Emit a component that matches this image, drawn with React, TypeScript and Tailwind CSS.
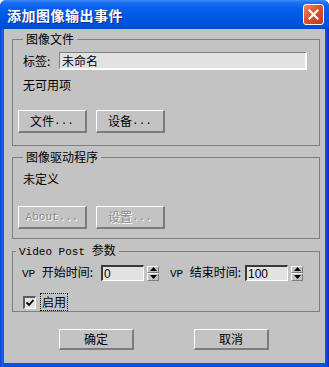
import type { ReactNode } from "react";

const cjk = "font-['Noto_Sans_CJK_SC',sans-serif]";
const mono = "font-['Liberation_Mono',monospace]";

function Btn({ children, disabled, className = "" }: { children: ReactNode; disabled?: boolean; className?: string }) {
  return (
    <button
      className={`flex items-center justify-center bg-[#c3c3c3] border-t border-l border-t-white border-l-white border-r-2 border-b-2 border-r-[#7c7c7c] border-b-[#7c7c7c] text-[12px] leading-none ${cjk} ${
        disabled ? "text-[#8a8a8a] [text-shadow:1px_1px_0_#ffffff]" : "text-black"
      } ${className}`}
    >
      {children}
    </button>
  );
}

function Spinner({ value }: { value: string }) {
  return (
    <div className="flex items-center">
      <div className="w-[43px] h-[16px] bg-[#e2e2e2] border-t-2 border-l-2 border-t-[#3a3a3a] border-l-[#3a3a3a] border-b border-r border-b-white border-r-white flex items-center pl-[1px] text-[12px] leading-none font-['Liberation_Sans',sans-serif]">
        {value}
      </div>
      <div className="ml-[3px] w-[12px] h-[15px] flex flex-col">
        <div className="flex-1 flex items-center justify-center border-t border-l border-t-white border-l-white border-r border-b border-r-[#7c7c7c] border-b-[#7c7c7c]">
          <svg width="7" height="4" viewBox="0 0 7 4">
            <path d="M3.5 0 L7 4 L0 4 Z" fill="#000" />
          </svg>
        </div>
        <div className="flex-1 flex items-center justify-center border-t border-l border-t-white border-l-white border-r border-b border-r-[#7c7c7c] border-b-[#7c7c7c]">
          <svg width="7" height="4" viewBox="0 0 7 4">
            <path d="M0 0 L7 0 L3.5 4 Z" fill="#000" />
          </svg>
        </div>
      </div>
    </div>
  );
}

export default function App() {
  return (
    <div className="w-[329px] h-[367px] flex flex-col rounded-t-[6px] overflow-hidden bg-[linear-gradient(90deg,#0a3fd0_0px,#1a62ee_2px,#0054e3_4px,#0054e3_325px,#0a45d8_327px,#0832b8_329px)]">
      {/* Title bar */}
      <div className="h-[29px] flex items-center pl-[7px] pr-[5px] bg-[linear-gradient(180deg,#3d8cf7_0px,#1a6ef5_3px,#0760ee_8px,#0058e6_16px,#0052de_24px,#0049d0_29px)]">
        <span className={`text-white font-bold text-[14px] leading-none tracking-[0.5px] ${cjk} [text-shadow:1px_1px_0_#0b2a8c]`}>
          添加图像输出事件
        </span>
        <div className="ml-auto w-[21px] h-[21px] rounded-[3px] border border-white bg-[linear-gradient(135deg,#f08a6a,#e0502c_45%,#c63a18)] flex items-center justify-center">
          <svg width="11" height="11" viewBox="0 0 11 11">
            <path d="M1.5 1.5 L9.5 9.5 M9.5 1.5 L1.5 9.5" stroke="#fff" strokeWidth="2.2" strokeLinecap="square" />
          </svg>
        </div>
      </div>

      {/* Client area */}
      <div className={`flex-1 mx-[4px] mb-[4px] bg-[#c3c3c3] flex flex-col ${cjk} text-[12px] text-black`}>
        {/* 图像文件 */}
        <fieldset className="mt-[3px] ml-[8px] mr-[5px] h-[114px] border border-[#7f7f7f]">
          <legend className="ml-[10px] px-[3px] text-[12px] leading-[14px]">图像文件</legend>
          <div className="mt-[6px] flex items-center pl-[10px]">
            <span className="w-[36px] leading-none">标签:</span>
            <div className="w-[248px] h-[18px] bg-[#e2e2e2] border-t border-l border-t-[#808080] border-l-[#808080] border-b-2 border-r-2 border-b-white border-r-white pl-[2px] flex items-center leading-none">
              未命名
            </div>
          </div>
          <div className="mt-[8px] pl-[10px] leading-[14px]">无可用项</div>
          <div className="mt-[18px] pl-[5px] flex gap-[9px]">
            <Btn className="w-[69px] h-[23px]">
              文件<span className={`${mono} text-[11px]`}>...</span>
            </Btn>
            <Btn className="w-[69px] h-[23px]">
              设备<span className={`${mono} text-[11px]`}>...</span>
            </Btn>
          </div>
        </fieldset>

        {/* 图像驱动程序 */}
        <fieldset className="mt-[4px] ml-[8px] mr-[5px] h-[89px] border border-[#7f7f7f]">
          <legend className="ml-[10px] px-[3px] text-[12px] leading-[14px]">图像驱动程序</legend>
          <div className="mt-[8px] pl-[10px] leading-[14px]">未定义</div>
          <div className="mt-[20px] pl-[5px] flex gap-[9px]">
            <Btn disabled className="w-[69px] h-[23px]">
              <span className={`${mono} text-[11px]`}>About...</span>
            </Btn>
            <Btn disabled className="w-[69px] h-[23px]">
              设置<span className={`${mono} text-[11px]`}>...</span>
            </Btn>
          </div>
        </fieldset>

        {/* Video Post 参数 */}
        <fieldset className="mt-[4px] ml-[8px] mr-[5px] h-[69px] border border-[#7f7f7f]">
          <legend className="ml-[3px] px-[3px] text-[12px] leading-[14px]">
            <span className={`${mono} text-[11px]`}>Video Post </span>参数
          </legend>
          <div className="mt-[6px] flex items-center pl-[9px]">
            <span className="w-[79px] leading-none">
              <span className={`${mono} text-[11px]`}>VP </span>开始时间:
            </span>
            <Spinner value="0" />
            <span className="ml-[11px] w-[75px] leading-none">
              <span className={`${mono} text-[11px]`}>VP </span>结束时间:
            </span>
            <Spinner value="100" />
          </div>
          <div className="mt-[12px] pl-[10px] flex items-center">
            <div className="w-[13px] h-[13px] bg-[#e2e2e2] border-t-2 border-l-2 border-t-[#5a5a5a] border-l-[#5a5a5a] border-b border-r border-b-white border-r-white flex items-center justify-center">
              <svg width="8" height="8" viewBox="0 0 8 8">
                <path d="M0.5 3.5 L3 6 L7.5 1" stroke="#000" strokeWidth="1.8" fill="none" />
              </svg>
            </div>
            <span className="ml-[4px] px-[1px] border border-dotted border-black leading-[16px]">启用</span>
          </div>
        </fieldset>

        {/* OK / Cancel */}
        <div className="mt-[17px] ml-[55px] flex gap-[60px]">
          <Btn className="w-[75px] h-[21px]">确定</Btn>
          <Btn className="w-[75px] h-[21px]">取消</Btn>
        </div>
      </div>
    </div>
  );
}
